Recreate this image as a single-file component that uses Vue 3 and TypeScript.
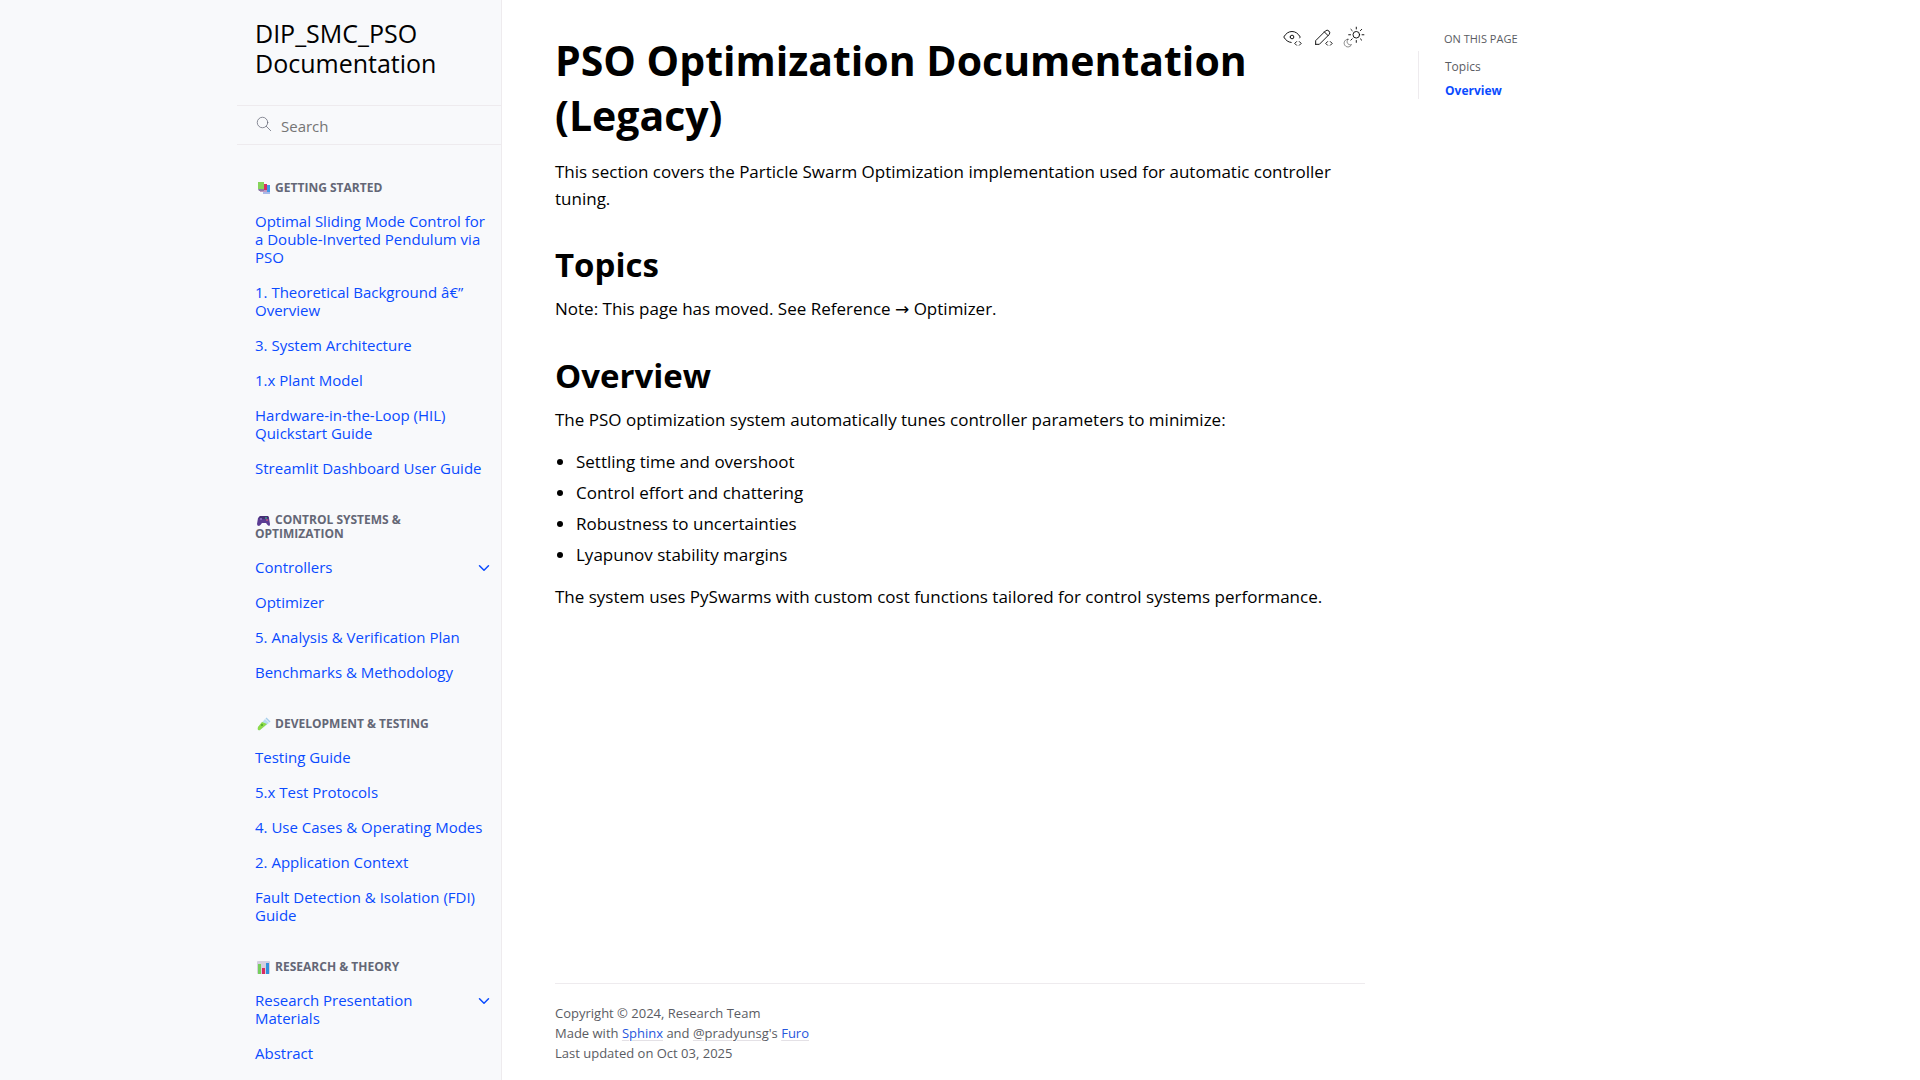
<script setup lang="ts">
interface NavItem {
  label: string
  expandable?: boolean
}

interface NavSection {
  icon: 'books' | 'gamepad' | 'tube' | 'chart'
  title: string
  items: NavItem[]
}

const sections: NavSection[] = [
  {
    icon: 'books',
    title: 'Getting Started',
    items: [
      { label: 'Optimal Sliding Mode Control for a Double-Inverted Pendulum via PSO' },
      { label: '1. Theoretical Background â€” Overview' },
      { label: '3. System Architecture' },
      { label: '1.x Plant Model' },
      { label: 'Hardware-in-the-Loop (HIL) Quickstart Guide' },
      { label: 'Streamlit Dashboard User Guide' },
    ],
  },
  {
    icon: 'gamepad',
    title: 'Control Systems & Optimization',
    items: [
      { label: 'Controllers', expandable: true },
      { label: 'Optimizer' },
      { label: '5. Analysis & Verification Plan' },
      { label: 'Benchmarks & Methodology' },
    ],
  },
  {
    icon: 'tube',
    title: 'Development & Testing',
    items: [
      { label: 'Testing Guide' },
      { label: '5.x Test Protocols' },
      { label: '4. Use Cases & Operating Modes' },
      { label: '2. Application Context' },
      { label: 'Fault Detection & Isolation (FDI) Guide' },
    ],
  },
  {
    icon: 'chart',
    title: 'Research & Theory',
    items: [
      { label: 'Research Presentation Materials', expandable: true },
      { label: 'Abstract' },
    ],
  },
]

// The source title carries a mis-decoded dash whose last character is a curly quote.
sections[0].items[1].label = '1. Theoretical Background \u00e2\u20ac\u201d Overview'

const goals: string[] = [
  'Settling time and overshoot',
  'Control effort and chattering',
  'Robustness to uncertainties',
  'Lyapunov stability margins',
]
</script>

<template>
  <div class="page">
    <aside class="sidebar">
      <div class="sidebar-inner">
        <a class="brand" href="#">DIP_SMC_PSO Documentation</a>

        <form class="search" role="search" @submit.prevent>
          <label for="site-search" aria-label="Search">
            <svg width="18" height="18" viewBox="0 0 24 24" class="line-icon">
              <circle cx="10" cy="10" r="7" />
              <path d="M21 21l-6-6" />
            </svg>
          </label>
          <input id="site-search" type="search" placeholder="Search" />
        </form>

        <nav class="tree">
          <section v-for="section in sections" :key="section.title">
            <p class="caption">
              <svg v-if="section.icon === 'books'" class="emoji" width="16" height="14" viewBox="0 0 16 14">
                <path d="M8 4h7v9H8z" fill="#3f9be8" />
                <path d="M8 11h7v2H8z" fill="#a9b9ea" />
                <path d="M6 3h6v8H6z" fill="#d92c62" />
                <path d="M5 9h7v2H5z" fill="#c09ac4" />
                <path d="M3 1h6v7H3z" fill="#86d45a" />
                <path d="M3 8h6v2H4z" fill="#8c7aa8" />
              </svg>
              <svg v-else-if="section.icon === 'gamepad'" class="emoji" width="16" height="14" viewBox="0 0 16 14">
                <path d="M5 3h8l1 2 1 6q0 2-1 2-1 0-3-3H7q-2 3-3 3-2 0-2-2l1-6z" fill="#5b3c93" />
                <path d="M5 3h8l1 2-2 1H6L4 5z" fill="#453074" />
                <circle cx="6" cy="6" r="1" fill="#8f78c4" />
                <circle cx="11" cy="5" r="1" fill="#3f9c8c" />
                <circle cx="12" cy="7" r="1" fill="#c25a7a" />
              </svg>
              <svg v-else-if="section.icon === 'tube'" class="emoji" width="16" height="14" viewBox="0 0 16 14">
                <path d="M10 2l4 4-9 7q-3 1-2-3z" fill="#b9dcf2" />
                <path d="M7 5l5 2-7 6q-3 1-2-3z" fill="#8ddb48" />
                <path d="M11 1l4 4" stroke="#a5cdec" stroke-width="1.5" />
                <circle cx="7" cy="8" r="1" fill="#4ea52f" />
              </svg>
              <svg v-else class="emoji" width="16" height="14" viewBox="0 0 16 14">
                <rect x="2" y="1" width="13" height="13" rx="1" fill="#d5cfe0" />
                <path d="M3 4h3v10H3z" fill="#76cf5c" />
                <path d="M7 8h3v6H7z" fill="#d92c62" />
                <path d="M11 3h3v11h-3z" fill="#3190de" />
              </svg>
              {{ section.title }}
            </p>
            <ul>
              <li v-for="item in section.items" :key="item.label">
                <a href="#">{{ item.label }}</a>
                <button v-if="item.expandable" type="button" :aria-label="'Toggle ' + item.label">
                  <svg width="18" height="18" viewBox="0 0 24 24">
                    <path d="M6 9l6 6 6-6" />
                  </svg>
                </button>
              </li>
            </ul>
          </section>
        </nav>
      </div>
    </aside>

    <main class="main">
      <article>
        <header class="title-row">
          <h1>PSO Optimization Documentation (Legacy)</h1>
          <div class="actions">
            <a href="#" aria-label="View this page">
              <svg width="22" height="22" viewBox="0 0 24 24" class="line-icon">
                <path d="M10 12a2 2 0 1 0 4 0a2 2 0 0 0 -4 0" />
                <path d="M11.11 17.958c-3.209 -.307 -5.91 -2.293 -8.11 -5.958c2.4 -4 5.4 -6 9 -6c3.6 0 6.6 2 9 6c-.21 .352 -.427 .688 -.647 1.008" />
                <path d="M20 21l2 -2l-2 -2" />
                <path d="M17 17l-2 2l2 2" />
              </svg>
            </a>
            <a href="#" aria-label="Edit this page">
              <svg width="22" height="22" viewBox="0 0 24 24" class="line-icon">
                <path d="M4 20h4l10.5 -10.5a2.828 2.828 0 1 0 -4 -4l-10.5 10.5v4" />
                <path d="M13.5 6.5l4 4" />
                <path d="M20 21l2 -2l-2 -2" />
                <path d="M17 17l-2 2l2 2" />
              </svg>
            </a>
            <button type="button" aria-label="Toggle Light / Dark / Auto color theme">
              <svg width="22" height="22" viewBox="0 0 24 24" class="line-icon">
                <path
                  opacity="0.5"
                  d="M5.411 14.504C5.471 14.504 5.532 14.504 5.591 14.504C3.639 16.319 4.383 19.569 6.931 20.352C7.693 20.586 8.512 20.551 9.25 20.252C8.023 23.207 4.056 23.725 2.11 21.184C.166 18.642 1.702 14.949 4.874 14.536C5.051 14.512 5.231 14.5 5.411 14.5Z"
                />
                <path d="M14.5 3.25v-2M14.5 15.85v2M10.044 5.094L8.63 3.68M19 14.05l1.414 1.414M8.2 9.55h-2M20.8 9.55h2M10.044 14.006L8.63 15.42M19 5.05l1.414 -1.414" />
                <circle cx="14.5" cy="9.55" r="3.6" />
              </svg>
            </button>
          </div>
        </header>
        <p>
          This section covers the Particle Swarm Optimization implementation used for automatic
          controller tuning.
        </p>

        <h2 id="topics">Topics</h2>
        <p>Note: This page has moved. See Reference <span class="arrow">→</span> Optimizer.</p>

        <h2 id="overview">Overview</h2>
        <p>The PSO optimization system automatically tunes controller parameters to minimize:</p>
        <ul class="goals">
          <li v-for="goal in goals" :key="goal">{{ goal }}</li>
        </ul>
        <p>The system uses PySwarms with custom cost functions tailored for control systems performance.</p>
      </article>

      <footer>
        <div>Copyright © 2024, Research Team</div>
        <div>
          Made with <a href="#">Sphinx</a> and <a class="muted" href="#">@pradyunsg</a>'s
          <a href="#">Furo</a>
        </div>
        <div>Last updated on Oct 03, 2025</div>
      </footer>
    </main>

    <aside class="toc">
      <div class="toc-title">On this page</div>
      <ul>
        <li><a href="#topics">Topics</a></li>
        <li><a class="current" href="#overview">Overview</a></li>
      </ul>
    </aside>
  </div>
</template>

<style>
body {
  margin: 0;
  background: #fff;
}
</style>

<style scoped>
.page {
  display: flex;
  align-items: flex-start;
  min-height: 100vh;
  color: #000;
  font-family: "Segoe UI", "Open Sans", "Noto Sans", sans-serif;
  font-size: 17px;
  line-height: 27px;
}

.page * {
  box-sizing: border-box;
}

a {
  color: #0a4bff;
  text-decoration: none;
}

p,
ul,
h1,
h2 {
  margin: 0;
  padding: 0;
}

button {
  display: flex;
  align-items: center;
  justify-content: center;
  padding: 0;
  border: 0;
  background: none;
  color: inherit;
}

svg {
  display: block;
}

.line-icon {
  fill: none;
  stroke: currentColor;
  stroke-width: 1;
  stroke-linecap: round;
  stroke-linejoin: round;
}

/* Left navigation */
.sidebar {
  position: sticky;
  top: 0;
  flex: 1 0 264px;
  display: flex;
  justify-content: flex-end;
  height: 100vh;
  background: #f8f9fb;
  border-right: 1px solid #eeebee;
}

.sidebar-inner {
  width: 264px;
  overflow: hidden;
}

.brand {
  display: block;
  padding: 18px 18px 27px;
  color: #000;
  font-size: 25px;
  line-height: 30px;
}

.search {
  display: flex;
  align-items: center;
  height: 40px;
  border-top: 1px solid #eeebee;
  border-bottom: 1px solid #eeebee;
}

.search label {
  padding: 0 8px 2px 18px;
  color: #646776;
}

.search input {
  flex: 1;
  min-width: 0;
  height: 38px;
  padding: 2px 0 0;
  border: 0;
  outline: 0;
  background: none;
  font: 15px "Segoe UI", "Open Sans", "Noto Sans", sans-serif;
}

.search input::placeholder {
  color: #757575;
}

.tree {
  padding-top: 9px;
}

.caption {
  margin: 27px 18px 9px;
  color: #646776;
  font-size: 12px;
  font-weight: 700;
  line-height: 14px;
  text-transform: uppercase;
}

.emoji {
  display: inline-block;
  margin-right: 1px;
  vertical-align: -3px;
}

.tree ul {
  list-style: none;
}

.tree li {
  display: flex;
  align-items: flex-start;
}

.tree a {
  flex: 1;
  padding: 8px 10px 9px 18px;
  font-size: 15px;
  line-height: 18px;
}

.tree button {
  width: 35px;
  height: 35px;
  color: #0a4bff;
}

.tree button svg {
  fill: none;
  stroke: currentColor;
  stroke-width: 2;
  stroke-linecap: round;
  stroke-linejoin: round;
}

/* Article */
.main {
  flex: 0 1 916px;
  display: flex;
  flex-direction: column;
  justify-content: space-between;
  min-width: 0;
  min-height: 100vh;
  padding: 26px 53px 17px;
}

.title-row {
  display: flex;
  align-items: flex-start;
  justify-content: space-between;
}

h1 {
  padding-top: 7px;
  font-size: 41px;
  line-height: 55px;
}

h2 {
  margin-top: 31px;
  margin-bottom: 8px;
  font-size: 33px;
  line-height: 44px;
}

.actions {
  display: flex;
  gap: 9px;
}

.actions a {
  color: inherit;
}

.title-row + p {
  margin-top: 15px;
}

.arrow {
  font-family: "Segoe UI", "DejaVu Sans", sans-serif;
}

.goals {
  display: flex;
  flex-direction: column;
  gap: 4px;
  margin: 15px 0;
  padding-left: 21px;
}

footer {
  margin-top: 32px;
  padding-top: 19px;
  border-top: 1px solid #eeebee;
  color: #5a5c63;
  font-size: 13px;
  line-height: 20px;
}

footer a {
  color: #2757dd;
  text-decoration: underline #e4e1e6;
  text-underline-offset: 2px;
}

footer a.muted {
  color: inherit;
}

/* Page contents */
.toc {
  position: sticky;
  top: 0;
  flex: 1 1 264px;
  padding-top: 31px;
  color: #5a5c63;
  font-size: 12px;
  line-height: 16px;
}

.toc-title {
  padding: 0 0 4px 26px;
  font-size: 11px;
  text-transform: uppercase;
}

.toc ul {
  padding-left: 26px;
  border-left: 1px solid #eeebee;
  list-style: none;
}

.toc a {
  display: block;
  padding-top: 8px;
  color: inherit;
}

.toc a.current {
  color: #0a4bff;
  font-weight: 700;
}
</style>
